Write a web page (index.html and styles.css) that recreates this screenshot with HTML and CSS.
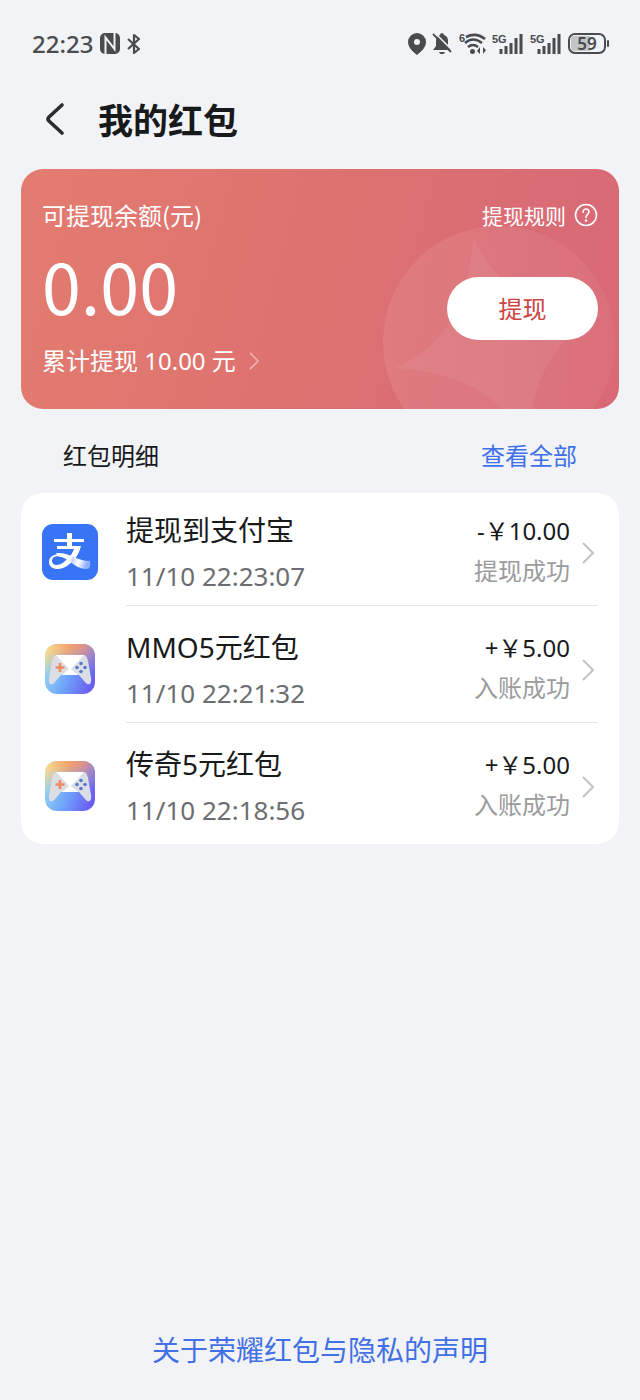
FILE: index.html
```html
<!DOCTYPE html>
<html lang="zh-CN">
<head>
<meta charset="utf-8">
<meta name="viewport" content="width=device-width, initial-scale=1">
<title>我的红包</title>
<link rel="stylesheet" href="styles.css">
</head>
<body>
<svg class="defs" width="0" height="0" aria-hidden="true">
  <defs>
    <linearGradient id="padBase" x1="0" y1="0.3" x2="1" y2="0.7">
      <stop offset="0" stop-color="#9ddcf0"/><stop offset="0.5" stop-color="#6fa6fb"/><stop offset="1" stop-color="#6a5cf0"/>
    </linearGradient>
    <linearGradient id="padWarm" x1="0" y1="0" x2="1" y2="0">
      <stop offset="0" stop-color="#f8dc8c"/><stop offset="0.5" stop-color="#f3a071"/><stop offset="0.8" stop-color="#dc8f8c"/><stop offset="1" stop-color="#a987c4"/>
    </linearGradient>
    <linearGradient id="padFade" x1="0.4" y1="0" x2="0.5" y2="1">
      <stop offset="0.1" stop-color="#fff"/><stop offset="0.6" stop-color="#fff" stop-opacity="0"/>
    </linearGradient>
    <mask id="padMask"><rect width="52" height="52" fill="url(#padFade)"/></mask>
    <symbol id="gamepad" viewBox="0 0 52 52">
      <rect x="1" y="1" width="50" height="50" rx="12" fill="url(#padBase)"/>
      <rect x="1" y="1" width="50" height="50" rx="12" fill="url(#padWarm)" mask="url(#padMask)"/>
      <path d="M13 12h26c3 0 4 2 5 6l3 17c1 7-3 8-6 4l-6-7H17l-6 7c-3 4-7 3-6-4l3-17c1-4 2-6 5-6z" fill="#dcdee5"/>
      <path d="M12 12h28L27 26q-1 1-2 0z" fill="#fff"/>
      <path d="M24 27q2-2 4 0l6 5H18z" fill="#fff"/>
      <path d="M16 20v9M11.500 24.500h9" stroke="#ed8c61" stroke-width="2.600"/>
      <g fill="#5777cb"><circle cx="37" cy="20.500" r="1.800"/><circle cx="37" cy="28.500" r="1.800"/><circle cx="33" cy="24.500" r="1.800"/><circle cx="41" cy="24.500" r="1.800"/></g>
    </symbol>
    <symbol id="signal" viewBox="0 0 32 22">
      <text class="tiny" x="0" y="10">5G</text>
      <path d="M9 21v-5M14 21v-8M19 21V10M24 21V5M29 21V1" fill="none" stroke="currentColor" stroke-width="3"/>
    </symbol>
    <symbol id="chevron" viewBox="0 0 12 22">
      <path d="M1 1l10 10L1 21" fill="none" stroke="currentColor" stroke-width="2"/>
    </symbol>
  </defs>
</svg>

<div class="screen">
  <div class="status">
    <div class="status-group">
      <span class="clock">22:23</span>
      <svg width="20" height="22" viewBox="0 0 20 22" role="img" aria-label="NFC">
        <rect width="20" height="21" rx="5" fill="currentColor"/>
        <path d="M5.500 21V4.500L14.500 16V0" fill="none" stroke="#f1f3f7" stroke-width="2"/>
      </svg>
      <svg width="14" height="22" viewBox="0 0 14 22" role="img" aria-label="蓝牙">
        <path d="M1 6l11 10-5 4V2l5 4L1 16" fill="none" stroke="currentColor" stroke-width="2.200" stroke-linejoin="round"/>
      </svg>
    </div>
    <div class="status-group status-right">
      <svg width="18" height="22" viewBox="0 0 18 22" role="img" aria-label="定位">
        <path fill-rule="evenodd" fill="currentColor" d="M9 0a9 9 0 0 1 9 9c0 5-4 9-9 13C4 18 0 14 0 9a9 9 0 0 1 9-9zm0 6a3 3 0 1 0 0 6 3 3 0 0 0 0-6z"/>
      </svg>
      <svg width="20" height="22" viewBox="0 0 20 22" role="img" aria-label="静音">
        <path d="M10 0c1 0 2 1 2 2 3 1 4 3 4 6v5l3 4H1l3-4V8c0-3 1-5 4-6 0-1 1-2 2-2zM7 19h6c-1 3-5 3-6 0z" fill="currentColor"/>
        <path d="M3 0l17 17" stroke="#f1f3f7" stroke-width="1.600"/><path d="M1 1l18 18" stroke="currentColor" stroke-width="1.800"/>
      </svg>
      <svg width="28" height="22" viewBox="0 0 28 22" role="img" aria-label="Wi-Fi 6">
        <text class="tiny" x="1" y="9">6</text>
        <g fill="none" stroke="currentColor" stroke-width="2.600"><path d="M8 4q10-5 19 2"/><path d="M7 10q8-7 17 0"/><path d="M10 14q5-4 10 0"/></g>
        <circle cx="14.500" cy="18.500" r="2.500" fill="currentColor"/>
        <path d="M19 18l3-4v7zM28 17l-3 4v-7z" fill="currentColor"/>
      </svg>
      <svg width="32" height="22" role="img" aria-label="5G 信号"><use href="#signal"/></svg>
      <svg width="32" height="22" role="img" aria-label="5G 信号"><use href="#signal"/></svg>
      <svg width="42" height="22" viewBox="0 0 42 22" role="img" aria-label="电量 59%">
        <rect x="1" y="1" width="36" height="19" rx="6" fill="#f1f3f7" stroke="currentColor" stroke-width="2"/>
        <path d="M7 3h15v15H7q-4 0-4-4V7q0-4 4-4z" fill="#c2c4c8"/>
        <rect x="39" y="7" width="2" height="7" rx="1" fill="currentColor"/>
        <text class="battery" x="19" y="17">59</text>
      </svg>
    </div>
  </div>

  <header class="header">
    <button class="back" type="button" aria-label="返回">
      <svg width="20" height="32" viewBox="0 0 20 32"><path d="M17 2L4 14q-2 2 0 4l13 12" fill="none" stroke="currentColor" stroke-width="3.600" stroke-linecap="round"/></svg>
    </button>
    <h1>我的红包</h1>
  </header>

  <main>
    <section class="card">
      <svg class="card-art" width="232" height="232" viewBox="0 0 232 232" aria-hidden="true">
        <defs><linearGradient id="coin" x1="0" y1="0.500" x2="1" y2="0.400"><stop offset="0" stop-color="#fff" stop-opacity="0.090"/><stop offset="1" stop-color="#fff" stop-opacity="0.040"/></linearGradient></defs>
        <circle cx="116" cy="116" r="116" fill="url(#coin)"/>
        <path d="M90 11Q120 84 221 89 149 119 144 221 114 148 12 142 84 113 90 11z" fill="#fff" fill-opacity="0.060"/>
      </svg>
      <div class="card-top">
        <span class="label">可提现余额(元)</span>
        <a class="rules" href="#rules">提现规则
          <svg width="24" height="24" viewBox="0 0 24 24" aria-hidden="true"><circle cx="12" cy="12" r="10.500" fill="none" stroke="currentColor" stroke-width="1.600"/><path d="M9 10q0-4 3-4t3 3q0 1-2 3-1 1-1 3" fill="none" stroke="currentColor" stroke-width="1.600"/><circle cx="12" cy="17.500" r="1.200" fill="currentColor"/></svg>
        </a>
      </div>
      <div class="card-main">
        <div>
          <div class="balance">0.00</div>
          <a class="total" href="#history">累计提现 10.00 元 <svg width="10" height="18"><use href="#chevron"/></svg></a>
        </div>
        <button class="withdraw" type="button">提现</button>
      </div>
    </section>

    <div class="section-head">
      <h2>红包明细</h2>
      <a href="#all">查看全部</a>
    </div>

    <ul class="list">
      <li><a class="row" href="#r1">
        <svg class="icon" width="56" height="56" viewBox="0 0 56 56" aria-hidden="true">
          <defs><linearGradient id="tail" x1="0" y1="0" x2="1" y2="0.200"><stop offset="0" stop-color="#fff"/><stop offset="0.450" stop-color="#fff"/><stop offset="0.550" stop-color="#c5d5ff"/><stop offset="0.750" stop-color="#fff"/><stop offset="1" stop-color="#8fb1fc"/></linearGradient></defs>
          <rect width="56" height="56" rx="11" fill="#3875f6"/>
          <path d="M12 15h30v3H12zM15 22h20v3H15zM25 9h5v14h-5z" fill="#fff"/>
          <path d="M33 22h6q-3 13-14 20c-7 5-18 4-18-4 0-7 8-9 15-7l-2 2c-6-2-10 0-10 4 0 5 7 5 12 1q9-7 11-16z" fill="#fff"/>
          <path d="M14 29c14-1 20 8 34 8q1 7-3 8c-13 0-17-11-29-13z" fill="url(#tail)"/>
        </svg>
        <div class="body">
          <div class="info"><span class="name">提现到支付宝</span><time>11/10 22:23:07</time></div>
          <div class="result"><span class="amount">-￥10.00</span><span class="state">提现成功</span></div>
          <svg class="arrow" width="12" height="22"><use href="#chevron"/></svg>
        </div>
      </a></li>
      <li><a class="row" href="#r2">
        <svg class="icon game" width="52" height="52" aria-hidden="true"><use href="#gamepad"/></svg>
        <div class="body">
          <div class="info"><span class="name">MMO5元红包</span><time>11/10 22:21:32</time></div>
          <div class="result"><span class="amount">+￥5.00</span><span class="state">入账成功</span></div>
          <svg class="arrow" width="12" height="22"><use href="#chevron"/></svg>
        </div>
      </a></li>
      <li><a class="row" href="#r3">
        <svg class="icon game" width="52" height="52" aria-hidden="true"><use href="#gamepad"/></svg>
        <div class="body">
          <div class="info"><span class="name">传奇5元红包</span><time>11/10 22:18:56</time></div>
          <div class="result"><span class="amount">+￥5.00</span><span class="state">入账成功</span></div>
          <svg class="arrow" width="12" height="22"><use href="#chevron"/></svg>
        </div>
      </a></li>
    </ul>
  </main>

  <footer><a href="#privacy">关于荣耀红包与隐私的声明</a></footer>
</div>
</body>
</html>
```

FILE: styles.css
```css
* { box-sizing: border-box; }

body {
  margin: 0;
  background: #f1f3f7;
  color: #18191b;
  font-family: "Noto Sans", "Noto Sans CJK SC", sans-serif;
  font-size: 24px;
  line-height: 36px;
}

h1, h2, ul { margin: 0; padding: 0; font-weight: 400; }
ul { list-style: none; }
a { color: inherit; text-decoration: none; }
button { border: 0; padding: 0; font: inherit; cursor: pointer; }
svg { display: block; flex: none; overflow: visible; }
.defs { position: absolute; }

.screen { display: flex; flex-direction: column; min-height: 100vh; }

.status {
  display: flex;
  align-items: center;
  justify-content: space-between;
  height: 87px;
  padding: 0 30px 0 32px;
  color: #4a4b4e;
}
.status-group { display: flex; align-items: center; gap: 7px; }
.status-right { gap: 6px; }
.clock { font-size: 24px; font-weight: 500; line-height: 32px; }
.tiny { font: 700 11px "Liberation Sans", sans-serif; fill: currentColor; }
.battery { font: 600 17px "Noto Sans", sans-serif; fill: currentColor; text-anchor: middle; }

.header { display: flex; align-items: center; gap: 33px; height: 64px; padding: 0 45px; }
.header h1 { font-family: "Noto Sans CJK SC", sans-serif; font-size: 35px; font-weight: 700; line-height: 48px; }
.back { color: #2c2d30; background: none; }

main { padding: 18px 21px 0; }

.card {
  position: relative;
  overflow: hidden;
  padding: 28px 21px 30px;
  border-radius: 22px;
  background: linear-gradient(105deg, #e37c70, #dd716f 50%, #d96b76 85%, #d96974);
  color: #fff;
  font-family: "Noto Sans CJK SC", sans-serif;
}
.card-art { position: absolute; right: 4px; top: 57px; }
.card-top, .card-main { position: relative; display: flex; justify-content: space-between; }
.rules { display: flex; align-items: center; gap: 8px; font-size: 21px; }
.balance { height: 92px; padding-top: 10px; font-size: 70px; line-height: 84px; }
.total {
  display: flex;
  align-items: center;
  gap: 13px;
  height: 54px;
  padding-top: 18px;
  font-family: "Noto Sans", "Noto Sans CJK SC", sans-serif;
}
.total svg { color: #efb1ad; }
.withdraw {
  width: 151px;
  height: 63px;
  margin-top: 44px;
  padding-bottom: 2px;
  border-radius: 32px;
  background: #fff;
  color: #cb4643;
}

.section-head { display: flex; justify-content: space-between; padding: 29px 42px 19px; }
.section-head h2 { font-size: 24px; }
.section-head a { color: #3f70ea; }

.list { border-radius: 22px; background: #fff; }
.row { display: flex; align-items: center; gap: 28px; padding: 0 21px; }
.game { margin: 0 2px; }
.body {
  display: flex;
  flex: 1;
  align-items: center;
  margin-bottom: 4px;
  padding: 14px 4px 6px 0;
  border-bottom: 1px solid #e6e6e8;
}
li:last-child .body { border-color: transparent; }
.info, .result { display: flex; flex-direction: column; }
.info { flex: 1; }
.name, time { line-height: 46px; }
.name { font-size: 28px; }
time { color: #6c6d70; font-size: 26px; }
.result { padding-bottom: 4px; text-align: right; }
.amount, .state { line-height: 40px; }
.state { color: #9b9b9d; }
.arrow { margin-left: 12px; color: #c4c4c6; }

footer { margin-top: auto; padding: 30px; text-align: center; color: #4370e4; font-size: 28px; line-height: 40px; }
```
